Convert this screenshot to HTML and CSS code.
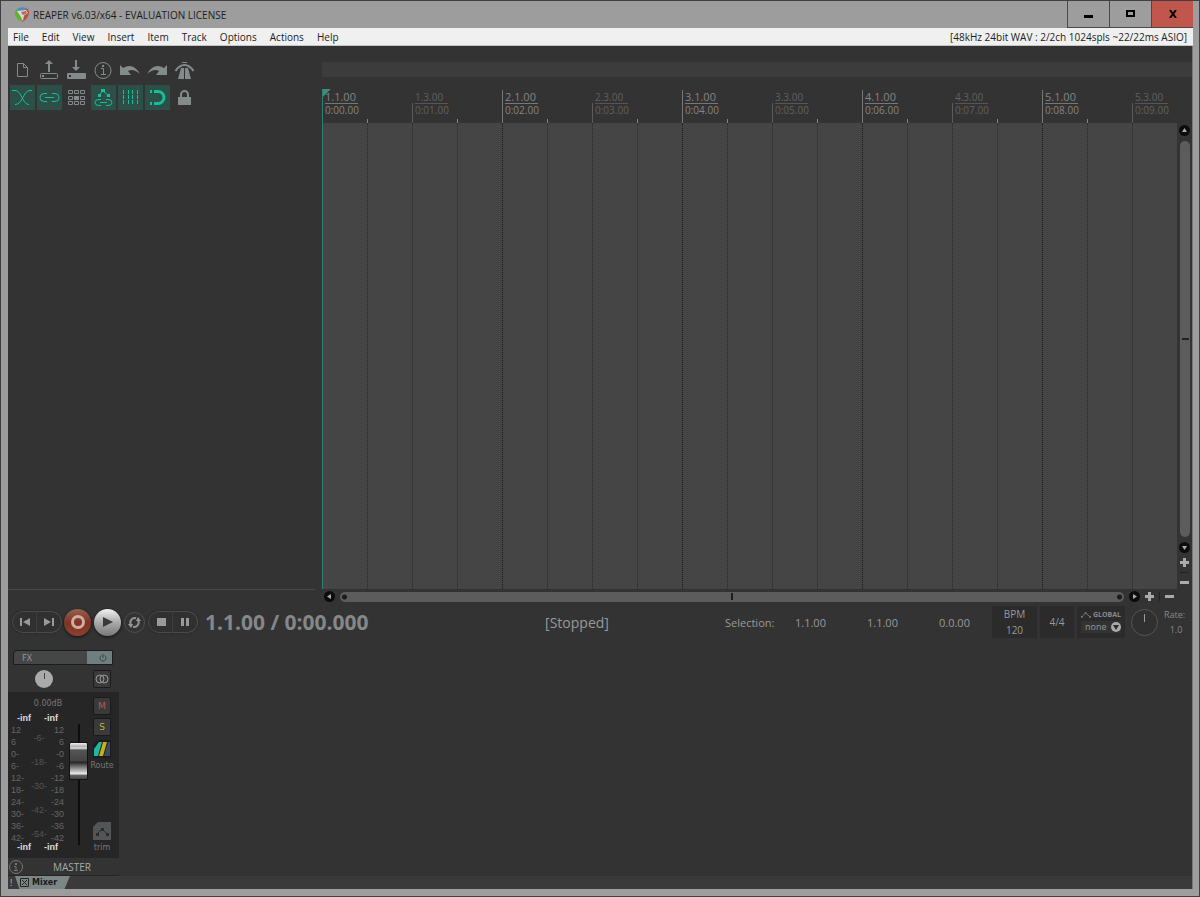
FILE: index.html
```html
<!DOCTYPE html>
<html lang="en">

<head>
    <meta charset="UTF-8">
    <meta name="viewport" content="width=device-width, initial-scale=1.0">
    <title>REAPER v6.03/x64 - EVALUATION LICENSE</title>
    <link rel="stylesheet" href="styles.css">
</head>

<body>
    <div class="window">
        <!-- title bar -->
        <header class="titlebar">
            <svg class="logo" width="16" height="16" viewBox="0 0 16 16">
                <path d="M3 2Q0 4 1 8Q3 13 8 15L7 9L4 5Z" fill="#5cb531" />
                <path d="M3 2Q7-1 12 1L11 4L4 5Z" fill="#4a8fc0" />
                <path d="M12 1Q16 3 15 7Q13 13 8 15L9 10L12 7L11 4Z" fill="#b35348" />
                <path d="M3 4L12 3L14 6L10 8L9 14L7 10Z" fill="#e2d3cf" />
                <path d="M7 5L12 4L13 6L9 8Z" fill="#b8685c" />
            </svg>
            <h1 class="title">REAPER v6.03/x64 - EVALUATION LICENSE</h1>
            <div class="winbtns">
                <button class="winbtn" aria-label="Minimize"><svg width="9" height="10" viewBox="0 0 9 10"><path d="M0 6h9v3H0z" /></svg></button>
                <button class="winbtn" aria-label="Maximize"><svg width="9" height="8" viewBox="0 0 9 8"><path d="M1 1h7v5H1z" fill="none" stroke="#000" stroke-width="2" /></svg></button>
                <button class="winbtn close" aria-label="Close"><svg width="8" height="8" viewBox="0 0 8 8"><path d="M1 0L7 8M7 0L1 8" stroke="#000" stroke-width="2" /></svg></button>
            </div>
        </header>

        <!-- menu -->
        <nav class="menubar">
            <button>File</button>
            <button>Edit</button>
            <button>View</button>
            <button>Insert</button>
            <button>Item</button>
            <button>Track</button>
            <button>Options</button>
            <button>Actions</button>
            <button>Help</button>
            <span class="audio">[48kHz 24bit WAV : 2/2ch 1024spls ~22/22ms ASIO]</span>
        </nav>

        <main class="client">
            <div class="workspace">
                <!-- track panel with the main toolbar -->
                <section class="tracks">
                    <div class="toolbar">
                        <button class="tool" aria-label="New project"><svg width="25" height="25" viewBox="0 0 25 25"><path d="M7.500 5.500h6l4 4v9h-10zM13.500 5.500v4h4" /></svg></button>
                        <button class="tool" aria-label="Open project"><svg width="25" height="25" viewBox="0 0 25 25"><rect x="3.500" y="15.500" width="17" height="5" rx="1" /><path class="fill" d="M11 14V6H8l4-4 4 4h-3v8zM5 17h2v2H5z" /></svg></button>
                        <button class="tool" aria-label="Save project"><svg width="25" height="25" viewBox="0 0 25 25"><path class="fill" d="M4 15h17q1 0 1 1v4q0 1-1 1H4q-1 0-1-1v-4q0-1 1-1zM11 2h2v7h3l-4 4-4-4h3z" /><path d="M5 18h2" stroke="#333" stroke-width="2" /></svg></button>
                        <button class="tool" aria-label="Project settings"><svg width="25" height="25" viewBox="0 0 25 25"><circle cx="12" cy="12.500" r="8" /><path d="M10 10.500h2.500v5.500M10 16.500h5" /><path class="fill" d="M11 7h2v2h-2z" /></svg></button>
                        <button class="tool" aria-label="Undo"><svg width="25" height="25" viewBox="0 0 25 25"><path class="fill" d="M2 7l3 3q10-6 17 6q-7-6-12-3l3 4H2z" /></svg></button>
                        <button class="tool" aria-label="Redo"><svg width="25" height="25" viewBox="0 0 25 25"><path class="fill" d="M22 7l-3 3q-10-6-17 6q7-6 12-3l-3 4h11z" /></svg></button>
                        <button class="tool" aria-label="Metronome"><svg width="25" height="25" viewBox="0 0 25 25"><path class="fill" d="M9 10h3v11H6zM13 10h3l3 11h-6zM10 4h5v1h-5z" /><path d="M3.500 13q4-6 9-6t9 6" stroke-width="2" /></svg></button>

                        <button class="tool on" aria-label="Auto crossfade"><svg width="25" height="25" viewBox="0 0 25 25"><path d="M2 5.500h3c7 0 7 14 14 14M22 5.500h-2c-7 0-7 14-15 14" /></svg></button>
                        <button class="tool on" aria-label="Item grouping"><svg width="25" height="25" viewBox="0 0 25 25"><path d="M10 8.500H7q-4 0-4 4t4 4h3M15 8.500h3q4 0 4 4t-4 4h-3M8 12.500h9" /></svg></button>
                        <button class="tool" aria-label="Ripple editing"><svg width="25" height="25" viewBox="0 0 25 25"><path d="M4.500 5.500h4v3h-4zM10.500 5.500h4v3h-4zM16.500 5.500h4v3h-4zM4.500 11.500h4v3h-4zM16.500 11.500h4v3h-4zM4.500 16.500h4v3h-4zM10.500 16.500h4v3h-4zM16.500 16.500h4v3h-4z" /><path class="fill" d="M10 11h5v4h-5z" /></svg></button>
                        <button class="tool on" aria-label="Envelope points"><svg width="25" height="25" viewBox="0 0 25 25"><path d="M8 10l4-4 5 4" /><path class="fill" d="M10 4h4v3h-4zM7 9h3v3H7zM16 9h3v3h-3z" /><path d="M10 14.500H8q-4 0-4 3t4 3h2M15 14.500h2q4 0 4 3t-4 3h-2M9 17.500h7" /></svg></button>
                        <button class="tool on" aria-label="Grid lines"><svg width="25" height="25" viewBox="0 0 25 25"><path d="M5.500 5v15M10.500 5v15M14.500 5v15M19.500 5v15" stroke-dasharray="4 1" /></svg></button>
                        <button class="tool on" aria-label="Snap"><svg width="25" height="25" viewBox="0 0 25 25"><path d="M9 6.500h4a6 6 0 0 1 0 12H9" stroke-width="3" /><path class="fill" d="M5 5h2v3H5zM5 17h2v3H5z" /></svg></button>
                        <button class="tool" aria-label="Lock"><svg width="25" height="25" viewBox="0 0 25 25"><path class="fill" d="M6 12h13v8H6z" /><path d="M9 13V9.500a3.500 3.500 0 0 1 7 0V13" stroke-width="2" /></svg></button>
                    </div>
                </section>

                <!-- timeline -->
                <section class="timeline">
                    <div class="region"></div>
                    <div class="ruler">
                        <div class="mark bar first"><b>1.1.00</b><span>0:00.00</span></div>
                        <div class="mark"><b>1.3.00</b><span>0:01.00</span></div>
                        <div class="mark bar"><b>2.1.00</b><span>0:02.00</span></div>
                        <div class="mark"><b>2.3.00</b><span>0:03.00</span></div>
                        <div class="mark bar"><b>3.1.00</b><span>0:04.00</span></div>
                        <div class="mark"><b>3.3.00</b><span>0:05.00</span></div>
                        <div class="mark bar"><b>4.1.00</b><span>0:06.00</span></div>
                        <div class="mark"><b>4.3.00</b><span>0:07.00</span></div>
                        <div class="mark bar"><b>5.1.00</b><span>0:08.00</span></div>
                        <div class="mark"><b>5.3.00</b><span>0:09.00</span></div>
                    </div>
                    <div class="arrange-row">
                        <div class="arrange">
                            <i class="cursor"></i><i></i><i></i><i></i>
                            <i class="bar"></i><i></i><i></i><i></i>
                            <i class="bar"></i><i></i><i></i><i></i>
                            <i class="bar"></i><i></i><i></i><i></i>
                            <i class="bar"></i><i></i><i></i><i></i>
                        </div>
                        <div class="vscroll">
                            <button class="arrow" aria-label="Scroll up"><svg width="11" height="11" viewBox="0 0 11 11"><path d="M3 7l2.500-4L8 7z" /></svg></button>
                            <div class="thumb"></div>
                            <button class="arrow" aria-label="Scroll down"><svg width="11" height="11" viewBox="0 0 11 11"><path d="M3 4l2.500 4L8 4z" /></svg></button>
                            <button class="zoom" aria-label="Zoom in"><svg width="9" height="9" viewBox="0 0 9 9"><path d="M3 0h3v3h3v3H6v3H3V6H0V3h3z" /></svg></button>
                            <span class="sep"></span>
                            <button class="zoom" aria-label="Zoom out"><svg width="9" height="9" viewBox="0 0 9 9"><path d="M0 3h9v3H0z" /></svg></button>
                        </div>
                    </div>
                    <div class="hscroll">
                        <button class="arrow" aria-label="Scroll left"><svg width="11" height="11" viewBox="0 0 11 11"><path d="M7 3L3 5.500 7 8z" /></svg></button>
                        <div class="thumb"></div>
                        <button class="arrow" aria-label="Scroll right"><svg width="11" height="11" viewBox="0 0 11 11"><path d="M4 3l4 2.500L4 8z" /></svg></button>
                        <button class="zoom" aria-label="Zoom in"><svg width="9" height="9" viewBox="0 0 9 9"><path d="M3 0h3v3h3v3H6v3H3V6H0V3h3z" /></svg></button>
                        <span class="sep"></span>
                        <button class="zoom" aria-label="Zoom out"><svg width="9" height="9" viewBox="0 0 9 9"><path d="M0 3h9v3H0z" /></svg></button>
                    </div>
                </section>
            </div>

            <!-- transport -->
            <section class="transport">
                <div class="play-controls">
                    <button class="seg left" aria-label="Go to start"><svg width="10" height="10" viewBox="0 0 10 10"><path d="M0 1h2v8H0zM10 1v8L3 5z" /></svg></button>
                    <button class="seg right" aria-label="Go to end"><svg width="10" height="10" viewBox="0 0 10 10"><path d="M8 1h2v8H8zM0 1v8l7-4z" /></svg></button>
                    <button class="round record" aria-label="Record"><svg width="16" height="16" viewBox="0 0 16 16"><circle cx="8" cy="8" r="5.500" fill="none" stroke="#d3aba1" stroke-width="3" /></svg></button>
                    <button class="round play" aria-label="Play"><svg width="12" height="10" viewBox="0 0 12 10"><path d="M1 0v10l10-5z" fill="#393939" /></svg></button>
                    <button class="loop" aria-label="Repeat"><svg width="13" height="13" viewBox="0 0 13 13"><path d="M3 9A4.500 4.500 0 0 1 8 2.300M10 4A4.500 4.500 0 0 1 5 10.700" fill="none" stroke="#919191" stroke-width="2" /><path d="M0 8h5l-2 4zM13 5H8l2-4z" /></svg></button>
                    <button class="seg left" aria-label="Stop"><svg width="10" height="10" viewBox="0 0 10 10"><path d="M1 1h9v8H1z" /></svg></button>
                    <button class="seg right" aria-label="Pause"><svg width="10" height="10" viewBox="0 0 10 10"><path d="M1 1h3v8H1zM6 1h3v8H6z" /></svg></button>
                </div>
                <div class="time">1.1.00 / 0:00.000</div>
                <div class="status">[Stopped]</div>
                <div class="selection">
                    <span>Selection:</span>
                    <span>1.1.00</span>
                    <span>1.1.00</span>
                    <span>0.0.00</span>
                </div>
                <div class="box bpm">
                    <label for="bpm">BPM</label>
                    <input id="bpm" type="text" value="120">
                </div>
                <button class="box sig">4/4</button>
                <div class="box global">
                    <label for="auto"><svg width="12" height="8" viewBox="0 0 12 8"><path d="M1 6l4-4 5 4" fill="none" stroke="#777" /><path d="M0 5h2v2H0zM4 1h2v2H4zM9 5h2v2H9z" fill="#777" /></svg>GLOBAL</label>
                    <div class="pick">
                        <select id="auto">
                            <option>none</option>
                        </select>
                        <svg width="10" height="10" viewBox="0 0 10 10"><circle cx="5" cy="5" r="5" fill="#aaa" /><path d="M2 3h6L5 8z" fill="#2c2c2c" /></svg>
                    </div>
                </div>
                <button class="rate-knob" aria-label="Playrate"></button>
                <div class="rate">
                    <label for="rate">Rate:</label>
                    <input id="rate" type="text" value="1.0">
                </div>
            </section>

            <!-- mixer -->
            <section class="mixer">
                <div class="strip">
                    <div class="fx">
                        <button class="fx-name">FX</button>
                        <button class="fx-power" aria-label="Bypass"><svg width="8" height="8" viewBox="0 0 8 8"><path d="M2.500 1.500a3 3 0 1 0 3 0M4 0v4" fill="none" stroke="#3b4544" /></svg></button>
                    </div>
                    <div class="pan-row">
                        <button class="pan" aria-label="Pan"></button>
                        <button class="btn" aria-label="Mono"><svg width="16" height="10" viewBox="0 0 16 10"><circle cx="6" cy="5" r="4" /><circle cx="10" cy="5" r="4" /></svg></button>
                    </div>
                    <div class="strip-body">
                        <div class="meter">
                            <div class="db">0.00dB</div>
                            <div class="peak"><span>-inf</span><span>-inf</span></div>
                            <div class="scales">
                                <ul>
                                    <li>12</li><li>6</li><li>0-</li><li>6-</li><li>12-</li><li>18-</li><li>24-</li><li>30-</li><li>36-</li><li>42-</li>
                                </ul>
                                <ul class="mid">
                                    <li>-6-</li><li>-18-</li><li>-30-</li><li>-42-</li><li>-54-</li>
                                </ul>
                                <ul class="end">
                                    <li>12</li><li>6</li><li>-0</li><li>-6</li><li>-12</li><li>-18</li><li>-24</li><li>-30</li><li>-36</li><li>-42</li>
                                </ul>
                            </div>
                            <div class="peak rms"><span>-inf</span><span>-inf</span></div>
                        </div>
                        <input class="fader" type="range" min="0" max="100" value="78" aria-label="Master volume">
                        <div class="side">
                            <button class="btn mute">M</button>
                            <button class="btn solo">S</button>
                            <button class="btn route" aria-label="Routing"><svg width="18" height="18" viewBox="0 0 18 18"><path d="M5 0h13v18H0V5z" fill="#1a1d20" /><path d="M6 2h3L5 16H1V9z" fill="#20b89c" /><path d="M10 2h4L10 16H6z" fill="#c9ae18" /><path d="M15 2h2v14h-6z" fill="#3b4b57" /></svg></button>
                            <span class="caption">Route</span>
                            <button class="btn trim" aria-label="Trim envelope"><svg width="18" height="18" viewBox="0 0 18 18"><path d="M5 0h13v18H0V5z" fill="#515555" /><path d="M4 12l5-5 5 5" fill="none" stroke="#2b2d2d" /><path d="M3 11h3v3H3zM8 6h3v3H8zM13 11h3v3h-3z" fill="#2b2d2d" /></svg></button>
                            <span class="caption">trim</span>
                        </div>
                    </div>
                    <div class="strip-name">
                        <svg width="16" height="16" viewBox="0 0 16 16"><circle cx="8" cy="8" r="6.500" fill="none" stroke="#777" /><path d="M6 7.500h2V12M6 11.500h4" fill="none" stroke="#777" /><path d="M7 4h2v2H7z" fill="#777" /></svg>
                        <span>MASTER</span>
                    </div>
                </div>
            </section>

            <!-- docker tabs -->
            <footer class="docker">
                <span class="alert">!</span>
                <button class="tab"><svg width="9" height="9" viewBox="0 0 9 9"><path d="M.500.500h8v8h-8zM2 2l5 5M7 2L2 7" fill="none" stroke="#222" /></svg>Mixer</button>
            </footer>
        </main>
    </div>
</body>

</html>
```
FILE: styles.css
```css
* {
    margin: 0;
    padding: 0;
    box-sizing: border-box;
}

body {
    font-family: "Open Sans", "Noto Sans", sans-serif;
    font-size: 11px;
    color: #999;
}

button,
input,
select {
    border: 0;
    background: none;
    font: inherit;
    color: inherit;
}

svg {
    display: block;
}

ul {
    list-style: none;
}

/* window frame */
.window {
    display: flex;
    flex-direction: column;
    min-height: 100vh;
    padding: 0 6px 7px 7px;
    border: 1px solid #404043;
    background: #9d9d9d;
}

.titlebar {
    display: flex;
    align-items: center;
    height: 27px;
    padding-left: 6px;
    color: #1c1c1c;
}

.title {
    flex: 1;
    margin-left: 3px;
    font-size: 10px;
    font-weight: 400;
}

.winbtns {
    display: flex;
    align-self: stretch;
}

.winbtn {
    display: flex;
    align-items: center;
    justify-content: center;
    width: 42px;
    border: 1px solid #4b4848;
    border-width: 0 0 1px 1px;
}

.close {
    background: #c1564c;
}

.menubar {
    display: flex;
    align-items: center;
    gap: 13px;
    height: 18px;
    padding: 0 6px 0 5px;
    border-bottom: 1px solid #c4c4c4;
    background: #f0f0f0;
    color: #1c1c1c;
    font-size: 10px;
}

.audio {
    margin-left: auto;
}

.client {
    display: flex;
    flex-direction: column;
    flex: 1;
    border-right: 1px solid #777;
    background: #333;
}

/* workspace */
.workspace {
    display: flex;
    flex: 1;
}

.tracks {
    width: 307px;
    margin-right: 7px;
    margin-bottom: 14px;
    padding: 12px 2px;
    border-bottom: 1px solid #484848;
}

.toolbar {
    display: grid;
    grid-template-columns: repeat(7, 25px);
    gap: 2px;
}

.tool {
    width: 25px;
    height: 25px;
    color: #848c8b;
}

.tool svg {
    fill: none;
    stroke: currentColor;
}

.tool .fill {
    fill: currentColor;
    stroke: none;
}

.on {
    background: #2c5048;
    color: #18bd9a;
}

.timeline {
    display: flex;
    flex-direction: column;
    flex: 1;
    min-width: 0;
    padding-top: 16px;
}

.region {
    height: 15px;
    margin-bottom: 12px;
    background: #3c3c3c;
}

.ruler {
    display: flex;
    height: 34px;
    margin-right: 15px;
    overflow: hidden;
}

.mark {
    position: relative;
    flex: 0 0 90px;
    padding: 2px 0 0 3px;
    color: #606060;
    font-size: 10px;
    line-height: 12px;
}

.mark b {
    display: block;
    width: 33px;
    border-bottom: 1px solid #555;
    font-weight: 400;
}

.mark span {
    display: block;
}

.mark::before {
    content: "";
    position: absolute;
    left: 0;
    bottom: 0;
    height: 20px;
    border-left: 1px solid #5a5a5a;
}

/* beat tick in the middle of a mark */
.mark::after {
    content: "";
    position: absolute;
    left: 45px;
    bottom: 0;
    height: 4px;
    border-left: 1px solid #888;
}

.mark.bar {
    color: #858585;
}

.mark.bar b {
    border-color: #777;
    font-size: 11px;
}

.mark.bar::before {
    height: 33px;
    border-color: #777;
}

.mark.first::before {
    width: 9px;
    height: 34px;
    border-color: #2c8173;
    background: linear-gradient(135deg, #3c8d80 0, #3c8d80 5px, transparent 6px) no-repeat;
}

.arrange-row {
    display: flex;
    flex: 1;
}

.arrange {
    display: flex;
    flex: 1;
    min-width: 0;
    overflow: hidden;
    background: #454545;
}

.arrange i {
    flex: 0 0 45px;
    border-left: 1px dotted #2a2a2a;
}

.arrange .bar {
    border-color: #1c1c1c;
}

.arrange .cursor {
    border-left: 1px solid #2c8173;
}

/* scroll bars */
.vscroll {
    display: flex;
    flex-direction: column;
    align-items: center;
    gap: 5px;
    width: 15px;
    padding: 2px 0;
}

.hscroll {
    display: flex;
    align-items: center;
    gap: 5px;
    height: 15px;
    padding: 0 18px 0 2px;
}

.arrow {
    width: 11px;
    height: 11px;
    border-radius: 50%;
    background: #0c0c0c;
}

.arrow svg,
.zoom svg {
    fill: #aaa;
}

.thumb {
    display: flex;
    flex: 1;
    border-radius: 5px;
    background: #5c5c5c;
}

.vscroll .thumb {
    align-items: center;
    width: 10px;
}

.vscroll .thumb::before {
    content: "";
    width: 7px;
    height: 2px;
    margin-left: 2px;
    background: #222;
}

.hscroll .thumb {
    height: 10px;
    background: radial-gradient(circle, #1c1c1c 2px, transparent 3px) left / 9px 10px no-repeat,
        radial-gradient(circle, #1c1c1c 2px, transparent 3px) right / 9px 10px no-repeat,
        linear-gradient(#1c1c1c, #1c1c1c) center / 2px 7px no-repeat,
        #5c5c5c;
}

.sep {
    background: #222;
}

.vscroll .sep {
    width: 9px;
    height: 1px;
}

.hscroll .sep {
    width: 1px;
    height: 9px;
}

/* transport */
.transport {
    display: flex;
    align-items: center;
    height: 36px;
    padding: 0 4px;
}

.play-controls {
    display: flex;
    align-items: center;
    width: 193px;
}

.play-controls svg {
    fill: #999;
}

.play-controls button {
    display: flex;
    align-items: center;
    justify-content: center;
}

.seg {
    width: 25px;
    height: 22px;
    border: 1px solid #4a4a4a;
    background: #303030;
    box-shadow: 0 0 2px #222;
}

.seg.left {
    border-radius: 11px 0 0 11px;
}

.seg.right {
    border-left: 0;
    border-radius: 0 11px 11px 0;
}

.round {
    width: 27px;
    height: 27px;
    margin: 0 1px 0 2px;
    border-radius: 50%;
    box-shadow: 0 1px 3px #111;
}

.record {
    background: linear-gradient(#97614f, #7d3423 50%, #8b4030);
}

.play {
    background: linear-gradient(#f2f2f2, #aaa 50%, #777);
}

.loop {
    width: 21px;
    height: 21px;
    margin: 0 3px 0 2px;
    border: 1px solid #505050;
    border-radius: 50%;
}

.time {
    width: 224px;
    color: #858789;
    font-size: 21px;
    font-weight: 700;
    white-space: nowrap;
}

.status {
    flex: 1;
    font-size: 14px;
    text-align: center;
}

.selection {
    display: flex;
    margin-right: 22px;
}

.selection span {
    width: 72px;
}

.selection span:last-child {
    width: 31px;
}

.selection span:first-child {
    width: 70px;
}

.box {
    height: 32px;
    margin-right: 3px;
    background: #2b2b2b;
}

.box input,
.rate input {
    display: block;
    width: 100%;
    text-align: center;
}

.bpm {
    width: 45px;
    font-size: 10px;
    line-height: 16px;
    text-align: center;
}

.bpm label {
    display: block;
}

.sig {
    width: 34px;
    font-size: 10px;
}

.global {
    width: 48px;
    padding: 4px 4px 0;
}

.global label {
    display: flex;
    align-items: center;
    gap: 1px;
    color: #888;
    font-size: 7px;
    font-weight: 700;
    line-height: 10px;
}

.pick {
    display: flex;
    align-items: center;
    margin-top: 1px;
    background: #333;
}

.pick select {
    width: 30px;
    padding-left: 4px;
    appearance: none;
    font-size: 9px;
    line-height: 12px;
}

.rate-knob {
    width: 27px;
    height: 27px;
    margin: 0 6px 0 3px;
    border: 1px solid #555;
    border-radius: 50%;
    background: linear-gradient(#999, #999) center 4px / 1px 8px no-repeat, #303030;
}

.rate {
    width: 24px;
    color: #888;
    font-size: 9px;
    line-height: 15px;
}

/* mixer */
.mixer {
    display: flex;
}

.strip {
    width: 111px;
    padding-top: 10px;
}

.fx {
    display: flex;
    height: 15px;
    margin: 0 6px 0 5px;
    border: 1px solid #1c1c1c;
    border-radius: 4px 0 0 0;
    background: #454646;
}

.fx-name {
    flex: 1;
    padding-left: 8px;
    font-size: 9px;
    text-align: left;
}

.fx-power {
    display: flex;
    align-items: center;
    justify-content: center;
    width: 25px;
    padding-left: 6px;
    background: #6f7f7f;
}

.pan-row {
    display: flex;
    align-items: center;
    justify-content: space-between;
    height: 27px;
    padding: 0 8px 0 27px;
}

.pan {
    width: 18px;
    height: 18px;
    border-radius: 50%;
    background: linear-gradient(#444, #444) center 3px / 1px 6px no-repeat, #aaa;
}

.btn {
    display: flex;
    align-items: center;
    justify-content: center;
    width: 18px;
    height: 18px;
    border: 1px solid #1a1a1a;
    border-radius: 2px;
    background: #3a3a3a;
    font-family: "DejaVu Sans", sans-serif;
    font-size: 9px;
}

.pan-row .btn svg {
    fill: none;
    stroke: #999;
}

.strip-body {
    display: flex;
    height: 166px;
    padding-top: 5px;
    background: #262626;
}

.meter {
    width: 61px;
    padding-top: 1px;
    font-family: "Liberation Sans", Arial, sans-serif;
    font-size: 9px;
    line-height: 12px;
}

.db {
    padding-left: 19px;
    color: #777;
    font-family: "DejaVu Sans", sans-serif;
    font-size: 8px;
    text-align: center;
}

.peak {
    display: flex;
    justify-content: space-between;
    margin-top: 3px;
    padding: 0 11px 0 9px;
    color: #ddd;
    font-weight: 700;
    line-height: 11px;
}

.scales {
    display: flex;
    justify-content: space-between;
    padding: 0 5px 0 3px;
    color: #666;
}

.mid {
    padding: 2px 0 0 3px;
    line-height: 24px;
    color: #555;
    text-align: center;
}

.end {
    text-align: right;
}

.peak.rms {
    margin-top: -3px;
    line-height: 9px;
}

.fader {
    width: 19px;
    height: 121px;
    margin-top: 27px;
    appearance: none;
    writing-mode: vertical-lr;
    direction: rtl;
    background: linear-gradient(#0d0d0d, #0d0d0d) center / 2px 100% no-repeat;
}

.fader::-webkit-slider-thumb {
    appearance: none;
    width: 19px;
    height: 38px;
    border: 1px solid #111;
    border-radius: 2px;
    background: linear-gradient(#eee 0, #aaa 4px, #eee 5px, #555 7px, #444 18px, #222 19px, #666 23px, #aaa 27px, #eee 31px, #666 32px, #444 100%);
}

.side {
    display: flex;
    flex-direction: column;
    align-items: center;
    width: 27px;
    padding-left: 1px;
}

.side .btn {
    margin-bottom: 3px;
}

.mute {
    color: #b5574f;
}

.solo {
    color: #b6b93c;
}

.side .route,
.side .trim {
    border: 0;
    background: none;
}

.side .route {
    margin-top: 1px;
}

.side .trim {
    margin-top: auto;
}

.caption {
    color: #777;
    font-family: "DejaVu Sans", sans-serif;
    font-size: 8px;
    line-height: 9px;
}

.side .caption:last-child {
    margin-bottom: 6px;
}

.strip-name {
    display: flex;
    align-items: center;
    gap: 29px;
    height: 18px;
    border-bottom: 1px solid #252525;
    color: #aaa;
    font-size: 10px;
}

/* docker */
.docker {
    display: flex;
    align-items: center;
    height: 13px;
    padding-left: 2px;
    background: #3a3a3a;
    font-size: 9px;
}

.alert {
    width: 5px;
    color: #bbb;
    line-height: 13px;
}

.tab {
    display: flex;
    align-items: center;
    gap: 3px;
    width: 55px;
    height: 13px;
    padding-left: 5px;
    background: #7a8786;
    clip-path: polygon(0 0, 100% 0, 90% 100%, 8% 100%);
    color: #1a1a1a;
    font-family: "DejaVu Sans", sans-serif;
    font-size: 8px;
    font-weight: 700;
}
```
